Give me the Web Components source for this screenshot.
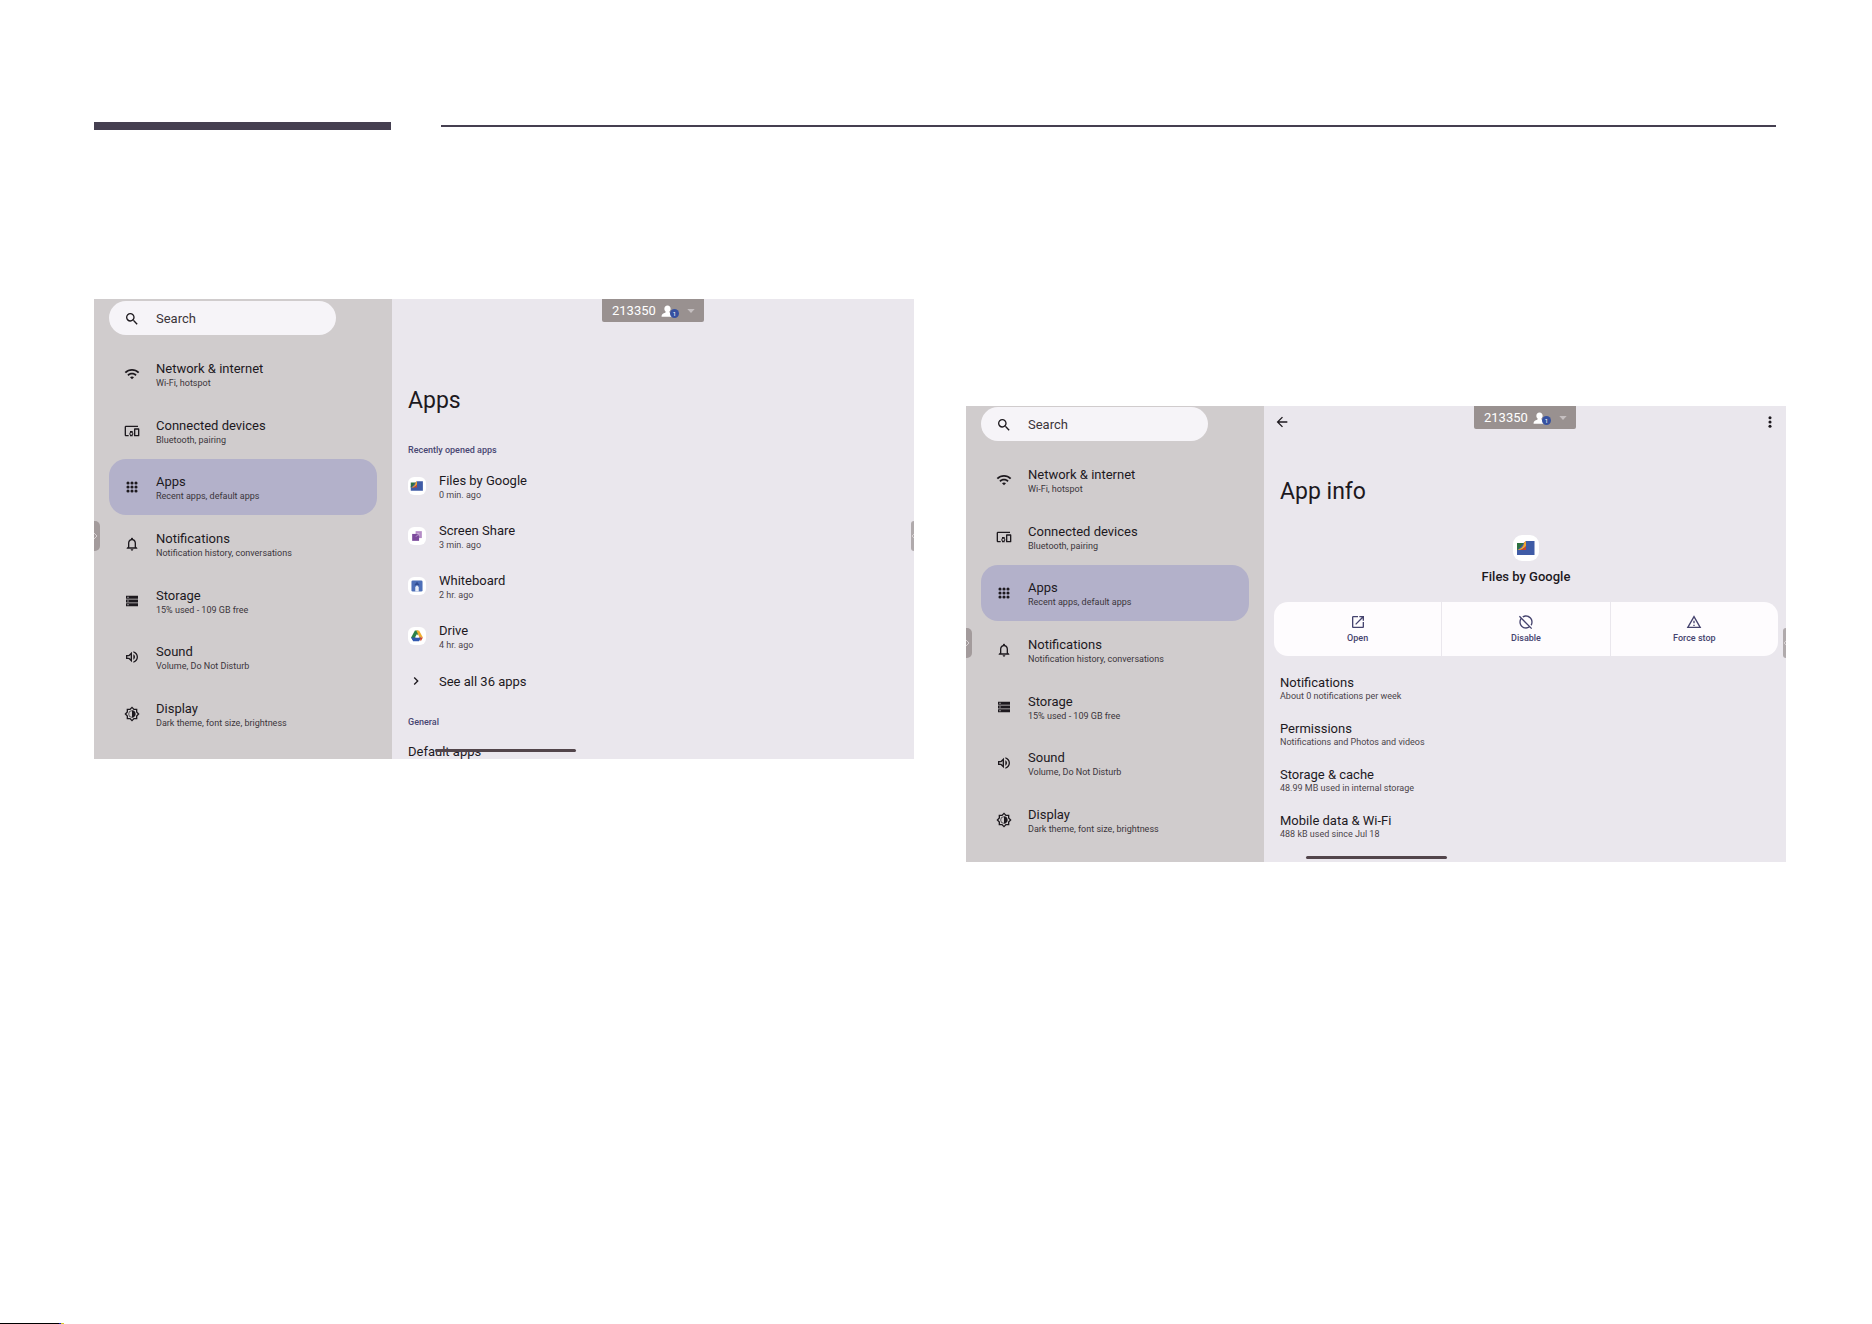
<!DOCTYPE html>
<html lang="en">
<head>
<meta charset="utf-8">
<title>Settings - Apps</title>
<style>
    body {
        margin: 0;
        background: #fff;
        font-family: Roboto, "Noto Sans", sans-serif;
        color: #1d191e;
    }
</style>
</head>
<body>
<manual-page>
    <settings-screen ratio="tall">
        <settings-nav slot="nav"></settings-nav>
        <apps-pane></apps-pane>
    </settings-screen>
    <settings-screen ratio="short">
        <settings-nav slot="nav"></settings-nav>
        <app-info-pane></app-info-pane>
    </settings-screen>
</manual-page>

<script>
const ICONS = {
    search: '<path d="M15.5 14h-.79l-.28-.27A6.47 6.47 0 0 0 16 9.5 6.5 6.5 0 1 0 9.5 16c1.61 0 3.09-.59 4.23-1.57l.27.28v.79l5 4.99L20.49 19l-4.99-5zm-6 0C7.01 14 5 11.99 5 9.5S7.01 5 9.5 5 14 7.01 14 9.5 11.99 14 9.5 14z"/>',
    wifi: '<path d="M1 9l2 2c4.97-4.97 13.03-4.97 18 0l2-2C16.93 2.93 7.08 2.93 1 9zm8 8l3 3 3-3c-1.65-1.66-4.34-1.66-6 0zm-4-4l2 2c2.76-2.76 7.24-2.76 10 0l2-2C15.14 9.14 8.87 9.14 5 13z"/>',
    devices: '<path d="M3 6h18V4H3c-1.1 0-2 .9-2 2v12c0 1.1.9 2 2 2h4v-2H3V6zm10 6H9v1.78c-.61.55-1 1.33-1 2.22s.39 1.67 1 2.22V20h4v-1.78c.61-.55 1-1.34 1-2.22s-.39-1.67-1-2.22V12zm-2 5.5c-.83 0-1.5-.67-1.5-1.5s.67-1.5 1.5-1.5 1.5.67 1.5 1.5-.67 1.5-1.5 1.5zM22 8h-6c-.5 0-1 .5-1 1v10c0 .5.5 1 1 1h6c.5 0 1-.5 1-1V9c0-.5-.5-1-1-1zm-1 10h-4v-8h4v8z"/>',
    apps: '<circle cx="6" cy="6" r="2.3"/><circle cx="12" cy="6" r="2.3"/><circle cx="18" cy="6" r="2.3"/><circle cx="6" cy="12" r="2.3"/><circle cx="12" cy="12" r="2.3"/><circle cx="18" cy="12" r="2.3"/><circle cx="6" cy="18" r="2.3"/><circle cx="12" cy="18" r="2.3"/><circle cx="18" cy="18" r="2.3"/>',
    bell: '<path d="M12 22c1.1 0 2-.9 2-2h-4c0 1.1.9 2 2 2zm6-6v-5c0-3.07-1.63-5.64-4.5-6.32V4c0-.83-.67-1.5-1.5-1.5s-1.5.67-1.5 1.5v.68C7.64 5.36 6 7.92 6 11v5l-2 2v1h16v-1l-2-2zm-2 1H8v-6c0-2.48 1.51-4.5 4-4.5s4 2.02 4 4.5v6z"/>',
    storage: '<path d="M3 20h18v-4.7H3V20zm2-3.2h2v1.6H5v-1.6zM3 4v4.7h18V4H3zm4 3.2H5V5.6h2v1.6zM3 14.3h18V9.7H3v4.6zm2-3.1h2v1.6H5v-1.6z"/>',
    sound: '<path d="M3 9v6h4l5 5V4L7 9H3zm7-.17v6.34L7.83 13H5v-2h2.83L10 8.83zM16.5 12c0-1.77-1.02-3.29-2.5-4.03v8.05c1.48-.73 2.5-2.25 2.5-4.02zM14 3.23v2.06c2.89.86 5 3.54 5 6.71s-2.11 5.85-5 6.71v2.06c4.01-.91 7-4.49 7-8.77s-2.99-7.86-7-8.77z"/>',
    display: '<path d="M20 8.69V4h-4.69L12 .69 8.69 4H4v4.69L.69 12 4 15.31V20h4.69L12 23.31 15.31 20H20v-4.69L23.31 12 20 8.69zm-2 5.79V18h-3.52L12 20.48 9.52 18H6v-3.52L3.52 12 6 9.52V6h3.52L12 3.52 14.48 6H18v3.52L20.48 12 18 14.48zM12 6.5v11c3.03 0 5.5-2.47 5.5-5.5S15.03 6.5 12 6.5z"/><path fill="none" stroke="currentColor" d="M12 7a5 5 0 0 0 0 10"/>',
    open: '<path d="M19 19H5V5h7V3H5c-1.11 0-2 .9-2 2v14c0 1.1.89 2 2 2h14c1.1 0 2-.9 2-2v-7h-2v7zM14 3v2h3.59l-9.83 9.83 1.41 1.41L19 6.41V10h2V3h-7z"/>',
    disable: '<path d="M2.81 2.81L1.39 4.22l2.27 2.27C2.61 8.07 2 9.96 2 12c0 5.52 4.48 10 10 10 2.04 0 3.93-.61 5.51-1.66l2.27 2.27 1.41-1.41L2.81 2.81zM12 20c-4.41 0-8-3.59-8-8 0-1.48.41-2.86 1.12-4.06l10.94 10.94C14.86 19.59 13.48 20 12 20zM7.94 5.12L6.49 3.66C8.07 2.61 9.96 2 12 2c5.52 0 10 4.48 10 10 0 2.04-.61 3.93-1.66 5.51l-1.46-1.46C19.59 14.86 20 13.48 20 12c0-4.41-3.59-8-8-8-1.48 0-2.86.41-4.06 1.12z"/>',
    warning: '<path d="M12 5.99L19.53 19H4.47L12 5.99M12 2L1 21h22L12 2zm1 14h-2v2h2v-2zm0-6h-2v4h2v-4z"/>',
    back: '<path d="M20 11H7.83l5.59-5.59L12 4l-8 8 8 8 1.41-1.41L7.83 13H20v-2z"/>',
    more: '<circle cx="12" cy="5.5" r="2.3"/><circle cx="12" cy="12" r="2.3"/><circle cx="12" cy="18.5" r="2.3"/>',
    chevron: '<path d="M10 6L8.59 7.41 13.17 12l-4.58 4.59L10 18l6-6z"/>',
    person: '<path d="M12 2c-3.6 0-5.800 2.700-5.800 6 0 2.400 1.100 4.300 2.700 5.600-.3 1.600-1.800 2-3.700 2.700C2.600 17.300 1 18.800 1 22.500h22c0-3.700-1.600-5.200-4.200-6.200-1.900-.7-3.400-1.100-3.700-2.700 1.600-1.300 2.700-3.200 2.700-5.600 0-3.300-2.200-6-5.700-6z"/>',
    caret: '<path d="M1 6h22L12 18z"/>'
};

const APP_ART = {
    files: '<path fill="#3f5ba6" d="M13 6h8.5v14H4V13z"/><path fill="#2c7040" d="M4 8h7l-7 7.5z"/><path fill="#f0a62f" d="M13 6v5.5L8 15H4.500C9 13.500 11 10.500 11 7.500z"/><path fill="#c8452f" d="M13 10.500V15H6c3.500-.3 6-2 7-4.500z"/>',
    share: '<path fill="#b58cc6" d="M11 6h9v10h-9z"/><path fill="#7c4a9c" d="M6 10h10v10H6z"/><path fill="none" stroke="#d9c2e3" stroke-width="1" d="M11.500 14l4-4M12.500 9.500H16V13"/>',
    board: '<rect x="5" y="5" width="16" height="16" rx="2" fill="#4d6fb8"/><path fill="#304c92" d="M13 7l4 5h-8z"/><path fill="#e6ecf7" d="M10.5 21v-6.5L13 12l2.5 2.5V21z"/>',
    drive: '<path fill="#2c8148" d="M10 5h4l2 3.500L8 20.500 4.500 15z"/><path fill="#f0ac2e" d="M12 5h4l5.500 10h-5z"/><path fill="#3158b0" d="M7.200 15H19l-3 5.500H7.500L4.500 15z"/><path fill="#c9452f" d="M16.500 15h5l-3 5.500z"/><path fill="#fff" d="M13 10l3 5h-6z"/>'
};

// Shared base: renders the template of the subclass into an open root
class BaseElement extends HTMLElement {
    constructor() {
        super();
        this.attachShadow({ mode: 'open' });
    }

    connectedCallback() {
        this.shadowRoot.innerHTML = this.template();
    }

    attr(name) {
        return this.getAttribute(name) || '';
    }
}

customElements.define('ui-icon', class extends BaseElement {
    template() {
        return `
            <style>
                :host { display: block; flex: none; width: 16px; height: 16px; }
                svg { display: block; width: 100%; height: 100%; fill: currentColor; }
            </style>
            <svg viewBox="0 0 24 24" aria-hidden="true">${ICONS[this.attr('name')]}</svg>
        `;
    }
});

customElements.define('app-icon', class extends BaseElement {
    template() {
        return `
            <style>
                :host { display: block; flex: none; width: 18px; height: 18px; }
                :host([large]) { width: 26px; height: 26px; }
                svg { display: block; width: 100%; height: 100%; }
            </style>
            <svg viewBox="0 0 26 26" aria-hidden="true">
                <rect width="26" height="26" rx="9" fill="#fff"/>
                ${APP_ART[this.attr('name')]}
            </svg>
        `;
    }
});

/* Page with the heading rules on top and the two screens side by side */
customElements.define('manual-page', class extends BaseElement {
    template() {
        return `
            <style>
                :host { display: flex; flex-direction: column; min-height: 100vh; }
                .rules {
                    display: flex;
                    align-items: center;
                    gap: 50px;
                    padding: 122px 96px 0 94px;
                }
                .thick { width: 297px; height: 8px; background: #453f50; }
                .thin { flex: 1; height: 2px; background: #453f50; }
                .screens {
                    flex: 1;
                    display: grid;
                    grid-template-columns: 1fr 1fr;
                    gap: 52px;
                    align-items: start;
                    padding: 169px 86px 0 94px;
                }
                ::slotted([ratio="short"]) { margin-top: 107px; }
                .marks { display: flex; height: 1px; }
                .black { width: 59px; background: #000; }
                .blue { width: 2px; background: #1a1aa8; }
                .yellow { width: 3px; background: #d8cf2c; }
            </style>
            <div class="rules"><div class="thick"></div><div class="thin"></div></div>
            <main class="screens"><slot></slot></main>
            <div class="marks"><div class="black"></div><div class="blue"></div><div class="yellow"></div></div>
        `;
    }
});

customElements.define('settings-screen', class extends BaseElement {
    template() {
        return `
            <style>
                :host {
                    display: grid;
                    grid-template-columns: 298px 1fr;
                    position: relative;
                    overflow: hidden;
                    aspect-ratio: 820 / 460;
                    min-height: 0;
                    background: #eae7ed;
                    --top-inset: 2px;
                }
                :host([ratio="short"]) { aspect-ratio: 820 / 456; --top-inset: 1px; }
                .cell { min-height: 0; min-width: 0; }
                .nav { background: #d0cccd; }
                edge-tab { position: absolute; top: 222px; left: 0; }
                edge-tab[side="right"] { left: auto; right: 0; }
                session-chip { position: absolute; top: 0; left: 508px; }
                .gesture {
                    position: absolute;
                    left: 341px;
                    bottom: 7px;
                    width: 141px;
                    height: 3px;
                    border-radius: 2px;
                    background: #52454b;
                }
                :host([ratio="short"]) .gesture { bottom: 3px; left: 340px; }
            </style>
            <div class="cell nav"><slot name="nav"></slot></div>
            <div class="cell"><slot></slot></div>
            <session-chip></session-chip>
            <edge-tab side="left"></edge-tab>
            <edge-tab side="right"></edge-tab>
            <div class="gesture"></div>
        `;
    }
});

customElements.define('edge-tab', class extends BaseElement {
    template() {
        const left = this.attr('side') === 'left';
        return `
            <style>
                :host { display: block; width: ${left ? 6 : 3}px; height: 30px; }
                button {
                    display: block;
                    width: 100%;
                    height: 100%;
                    padding: 0;
                    border: 0;
                    overflow: hidden;
                    color: #d6d0d2;
                    background: ${left ? '#a39b9c' : '#b0aaac'};
                    border-radius: ${left ? '0 5px 5px 0' : '4px 0 0 4px'};
                }
                svg { display: block; width: 4px; height: 8px; }
            </style>
            <button type="button" aria-label="Open side toolbar">
                <svg viewBox="0 0 4 8" fill="none" stroke="currentColor"><path d="${left ? 'M0 1l3 3-3 3' : 'M4 1L1 4l3 3'}"/></svg>
            </button>
        `;
    }
});

customElements.define('session-chip', class extends BaseElement {
    template() {
        return `
            <style>
                :host { display: block; }
                button {
                    display: flex;
                    align-items: center;
                    height: 23px;
                    padding: 0 9px 0 10px;
                    border: 0;
                    border-radius: 0 0 2px 2px;
                    background: #999190;
                    color: #fff;
                    font: 13px/22px Roboto, sans-serif;
                }
                .people { display: flex; align-items: center; position: relative; margin-left: 5px; padding-right: 5px; }
                .people ui-icon { width: 13px; height: 14px; }
                .badge {
                    position: absolute;
                    right: 0;
                    bottom: 0;
                    width: 9px;
                    height: 9px;
                    border-radius: 50%;
                    background: #3651a0;
                    font: 6px/9px Roboto, sans-serif;
                    text-align: center;
                }
                .caret { width: 8px; height: 8px; margin-left: 8px; color: #c5bfc0; }
            </style>
            <button type="button">
                <span>213350</span>
                <span class="people"><ui-icon name="person"></ui-icon><span class="badge">1</span></span>
                <ui-icon class="caret" name="caret"></ui-icon>
            </button>
        `;
    }
});

customElements.define('settings-nav', class extends BaseElement {
    template() {
        return `
            <style>
                :host { display: block; padding: var(--top-inset) 15px 0; }
                .search {
                    display: flex;
                    align-items: center;
                    gap: 16px;
                    height: 34px;
                    margin-right: 41px;
                    padding: 1px 15px 0;
                    box-sizing: border-box;
                    border-radius: 17px;
                    background: #f6f4f8;
                }
                input {
                    flex: 1;
                    min-width: 0;
                    padding: 1px 0 0;
                    border: 0;
                    outline: 0;
                    background: none;
                    color: inherit;
                    font: 13px/16px Roboto, sans-serif;
                }
                input::placeholder { color: #3a353a; opacity: 1; }
                nav {
                    display: flex;
                    flex-direction: column;
                    justify-content: space-between;
                    height: 396px;
                    margin-top: 11px;
                }
            </style>
            <label class="search">
                <ui-icon name="search"></ui-icon>
                <input type="text" placeholder="Search" aria-label="Search">
            </label>
            <nav>
                <nav-item icon="wifi" note="Wi-Fi, hotspot">Network &amp; internet</nav-item>
                <nav-item icon="devices" note="Bluetooth, pairing">Connected devices</nav-item>
                <nav-item icon="apps" note="Recent apps, default apps" selected>Apps</nav-item>
                <nav-item icon="bell" note="Notification history, conversations">Notifications</nav-item>
                <nav-item icon="storage" note="15% used - 109 GB free">Storage</nav-item>
                <nav-item icon="sound" note="Volume, Do Not Disturb">Sound</nav-item>
                <nav-item icon="display" note="Dark theme, font size, brightness">Display</nav-item>
            </nav>
        `;
    }
});

customElements.define('nav-item', class extends BaseElement {
    template() {
        return `
            <style>
                :host { display: block; }
                a {
                    display: flex;
                    align-items: center;
                    gap: 16px;
                    height: 56px;
                    padding: 0 15px;
                    border-radius: 17px;
                    color: inherit;
                    text-decoration: none;
                }
                :host([selected]) a { background: #b3b1ca; }
                .text { padding-top: 2px; }
                .title { display: block; font-size: 13px; line-height: 16px; }
                .note { display: block; font-size: 9px; line-height: 12px; color: #3b353b; }
            </style>
            <a href="#">
                <ui-icon name="${this.attr('icon')}"></ui-icon>
                <span class="text">
                    <span class="title"><slot></slot></span>
                    <span class="note">${this.attr('note')}</span>
                </span>
            </a>
        `;
    }
});

customElements.define('apps-pane', class extends BaseElement {
    template() {
        return `
            <style>
                :host { display: block; padding: 88px 16px 0; }
                h1 { margin: 0 0 29px; font-size: 23px; font-weight: 400; line-height: 28px; }
                h2 { margin: 0; font-size: 9px; font-weight: 500; line-height: 12px; color: #484672; }
                .rows { margin: 5px 0 15px; }
                .default { display: block; margin-top: 16px; color: inherit; font-size: 13px; line-height: 16px; text-decoration: none; }
            </style>
            <h1>Apps</h1>
            <h2>Recently opened apps</h2>
            <div class="rows">
                <app-row app="files" note="0 min. ago">Files by Google</app-row>
                <app-row app="share" note="3 min. ago">Screen Share</app-row>
                <app-row app="board" note="2 hr. ago">Whiteboard</app-row>
                <app-row app="drive" note="4 hr. ago">Drive</app-row>
                <app-row>See all 36 apps</app-row>
            </div>
            <h2>General</h2>
            <a class="default" href="#">Default apps</a>
        `;
    }
});

customElements.define('app-row', class extends BaseElement {
    template() {
        const app = this.attr('app');
        return `
            <style>
                :host { display: block; }
                a {
                    display: flex;
                    align-items: center;
                    gap: 13px;
                    height: ${app ? 50 : 40}px;
                    color: inherit;
                    text-decoration: none;
                }
                .lead { width: 18px; }
                .text { padding-top: 2px; }
                .title { display: block; font-size: 13px; line-height: 16px; }
                .note { display: block; font-size: 9px; line-height: 12px; color: #4a444a; }
            </style>
            <a href="#">
                <span class="lead">${app ? `<app-icon name="${app}"></app-icon>` : '<ui-icon name="chevron"></ui-icon>'}</span>
                <span class="text">
                    <span class="title"><slot></slot></span>
                    ${app ? `<span class="note">${this.attr('note')}</span>` : ''}
                </span>
            </a>
        `;
    }
});

customElements.define('app-info-pane', class extends BaseElement {
    template() {
        return `
            <style>
                :host { display: block; padding: 8px 8px 0 10px; }
                .toolbar { display: flex; justify-content: space-between; }
                .toolbar button { padding: 0; border: 0; background: none; color: inherit; }
                h1 { margin: 48px 0 29px 6px; font-size: 23px; font-weight: 400; line-height: 28px; }
                .app { display: flex; flex-direction: column; align-items: center; gap: 8px; }
                h2 { margin: 0; font-size: 13px; font-weight: 500; line-height: 16px; }
                .actions {
                    display: grid;
                    grid-template-columns: repeat(3, 1fr);
                    gap: 1px;
                    margin: 17px 0 20px;
                    border-radius: 14px;
                    overflow: hidden;
                }
                .list { display: grid; gap: 20px; padding-left: 6px; }
            </style>
            <div class="toolbar">
                <button type="button" aria-label="Back"><ui-icon name="back"></ui-icon></button>
                <button type="button" aria-label="More options"><ui-icon name="more"></ui-icon></button>
            </div>
            <h1>App info</h1>
            <div class="app">
                <app-icon name="files" large></app-icon>
                <h2>Files by Google</h2>
            </div>
            <div class="actions">
                <action-button icon="open">Open</action-button>
                <action-button icon="disable">Disable</action-button>
                <action-button icon="warning">Force stop</action-button>
            </div>
            <div class="list">
                <info-row note="About 0 notifications per week">Notifications</info-row>
                <info-row note="Notifications and Photos and videos">Permissions</info-row>
                <info-row note="48.99 MB used in internal storage">Storage &amp; cache</info-row>
                <info-row note="488 kB used since Jul 18">Mobile data &amp; Wi-Fi</info-row>
            </div>
        `;
    }
});

customElements.define('action-button', class extends BaseElement {
    template() {
        return `
            <style>
                :host { display: block; }
                button {
                    display: flex;
                    flex-direction: column;
                    align-items: center;
                    justify-content: center;
                    gap: 2px;
                    width: 100%;
                    height: 54px;
                    padding: 0;
                    border: 0;
                    background: #fefcfe;
                    color: #45436e;
                    font: 500 9px/12px Roboto, sans-serif;
                }
            </style>
            <button type="button"><ui-icon name="${this.attr('icon')}"></ui-icon><span><slot></slot></span></button>
        `;
    }
});

customElements.define('info-row', class extends BaseElement {
    template() {
        return `
            <style>
                :host { display: block; }
                a { display: block; color: inherit; text-decoration: none; }
                .title { display: block; font-size: 13px; line-height: 14px; }
                .note { display: block; font-size: 9px; line-height: 12px; color: #4a444a; }
            </style>
            <a href="#">
                <span class="title"><slot></slot></span>
                <span class="note">${this.attr('note')}</span>
            </a>
        `;
    }
});
</script>
</body>
</html>
